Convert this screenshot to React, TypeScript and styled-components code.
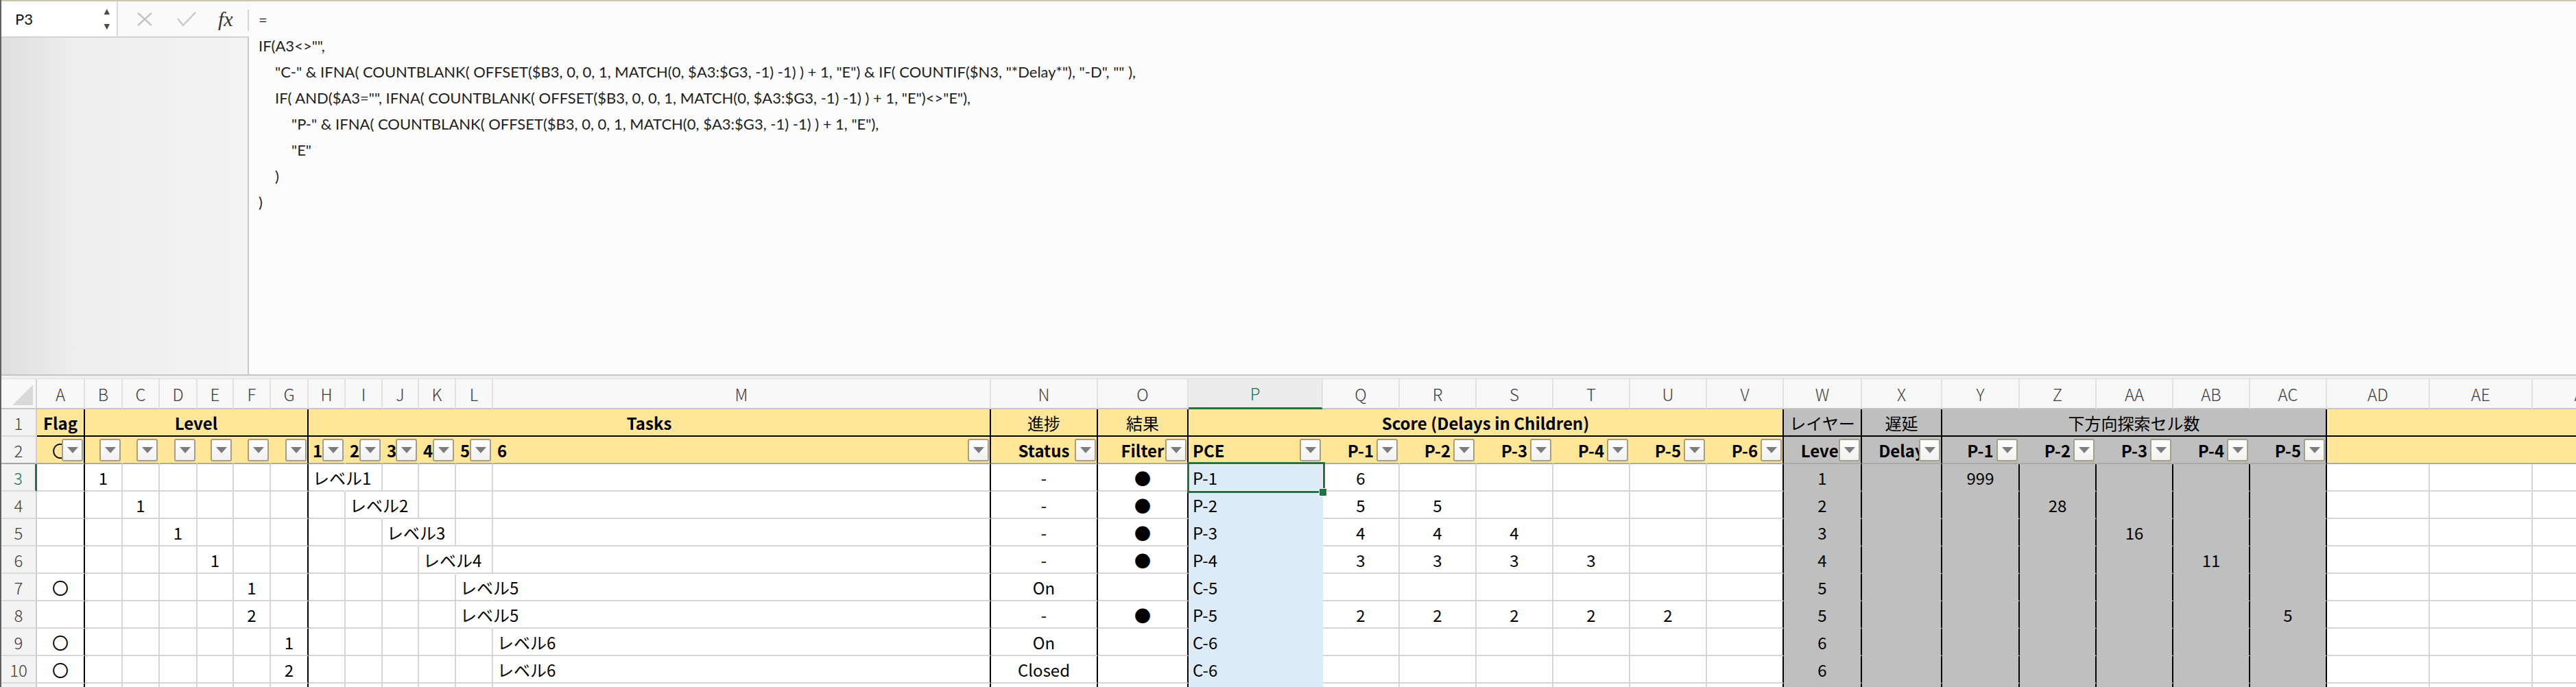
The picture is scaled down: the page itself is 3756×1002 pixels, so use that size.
import React from "react";
import styled, { createGlobalStyle } from "styled-components";

const YELLOW = "#ffe699";
const GRAY = "#bfbfbf";
const BLUE = "#ddebf7";
const GRID = "#d6d6d6";
const GREEN = "#217346";
const FREEZE = "#a9a9a9";

type Edge = "none" | "grid" | "black" | "freeze";

const edge = (e?: Edge) =>
  e === "black" ? "#000" : e === "grid" ? GRID : e === "freeze" ? FREEZE : "transparent";

const GlobalStyle = createGlobalStyle`
  html, body { margin: 0; padding: 0; background: #ffffff; }
  body { width: 3756px; height: 1002px; overflow: hidden; }
`;

const Window = styled.div`
  width: 3756px;
  height: 1002px;
  overflow: hidden;
  display: flex;
  flex-direction: column;
  box-sizing: border-box;
  border-left: 2px solid #5e6066;
  background: #fff;
`;

const TopRule = styled.div`
  height: 2px;
  background: #c9c5b1;
`;

const FormulaBar = styled.div`
  height: 544px;
  display: flex;
`;

const LeftPane = styled.div`
  width: 361px;
  display: flex;
  flex-direction: column;
`;

const NameRow = styled.div`
  height: 51px;
  display: flex;
  border-bottom: 2px solid #d3d3d3;
`;

const NameBox = styled.div`
  width: 170px;
  box-sizing: border-box;
  background: #fff;
  border-right: 2px solid #dadada;
  display: flex;
  align-items: center;
  justify-content: space-between;
  padding: 0 10px 0 20px;
  font-family: "Lato", "Liberation Sans", sans-serif;
  font-size: 22px;
  color: #111;
`;

const Spinner = styled.div`
  display: flex;
  flex-direction: column;
  gap: 11px;
  color: #4a4a4a;
  font-size: 11px;
  line-height: 11px;
  font-family: "DejaVu Sans", sans-serif;
`;

const BarButtons = styled.div`
  flex: 1;
  position: relative;
  display: flex;
  align-items: center;
  gap: 36px;
  padding-left: 28px;
  background: #fafafa;

  &::after {
    content: "";
    position: absolute;
    right: 0;
    top: 12px;
    bottom: 8px;
    width: 2px;
    background: #d4d4d4;
  }
`;

const Fx = styled.span`
  font-family: "Liberation Serif", serif;
  font-style: italic;
  font-size: 30px;
  color: #333;
  margin-left: -4px;
`;

const PaneFill = styled.div`
  flex: 1;
  background: linear-gradient(90deg, #dedede 0%, #eeeeee 30%, #f3f3f3 100%);
  border-right: 2px solid #c9c9c9;
`;

const FormulaText = styled.div`
  flex: 1;
  background: #fcfcfc;
  padding: 8px 0 0 14px;
  font-family: "Lato", "Liberation Sans", sans-serif;
  font-size: 22px;
  line-height: 38px;
  color: #1e1e1e;
`;

const Line = styled.div<{ $indent: number }>`
  white-space: pre;
  padding-left: ${(p) => p.$indent * 24}px;
`;

const Splitter = styled.div`
  height: 7px;
  box-sizing: border-box;
  background: #f0f0f0;
  border-top: 2px solid #c6c6c6;
  border-bottom: 1px solid #dcdcdc;
`;

const Sheet = styled.div<{ $cols: string }>`
  flex: 1;
  overflow: hidden;
  display: grid;
  grid-template-columns: ${(p) => p.$cols};
  grid-template-rows: 44px;
  grid-auto-rows: 40px;
  font-family: "Noto Sans CJK JP", "Liberation Sans", sans-serif;
  font-size: 24px;
  color: #000;
`;

const Corner = styled.div`
  position: relative;
  background: #f8f8f8;
  box-sizing: border-box;
  border-right: 2px solid #d4d4d4;
  border-bottom: 2px solid #c6c6c6;

  &::after {
    content: "";
    position: absolute;
    right: 4px;
    bottom: 4px;
    border-left: 30px solid transparent;
    border-bottom: 30px solid #d9d9d9;
  }
`;

const ColHead = styled.div<{ $sel?: boolean }>`
  box-sizing: border-box;
  display: flex;
  align-items: center;
  justify-content: center;
  background: ${(p) => (p.$sel ? "#ececec" : "#f8f8f8")};
  color: ${(p) => (p.$sel ? GREEN : "#3a3a3a")};
  border-right: 2px solid #e2e2e2;
  border-bottom: ${(p) => (p.$sel ? `3px solid ${GREEN}` : "2px solid #c6c6c6")};
  font-weight: 300;
  overflow: hidden;
`;

const RowHead = styled.div<{ $sel?: boolean; $freeze?: boolean }>`
  box-sizing: border-box;
  display: flex;
  align-items: center;
  justify-content: center;
  background: #f3f3f3;
  color: ${(p) => (p.$sel ? GREEN : "#3a3a3a")};
  border-right: ${(p) => (p.$sel ? `3px solid ${GREEN}` : "2px solid #cdcdcd")};
  border-bottom: 2px solid ${(p) => (p.$freeze ? FREEZE : "#dadada")};
  font-weight: 300;
`;

const Cell = styled.div<{
  $bg: string;
  $r: Edge;
  $b: Edge;
  $span: number;
  $align: "left" | "center";
  $bold?: boolean;
  $front?: boolean;
}>`
  position: relative;
  box-sizing: border-box;
  display: flex;
  align-items: center;
  justify-content: ${(p) => (p.$align === "left" ? "flex-start" : "center")};
  padding: 0 ${(p) => (p.$align === "left" ? "6px" : "2px")};
  grid-column: span ${(p) => p.$span};
  background: ${(p) => p.$bg};
  border-right: 2px solid ${(p) => edge(p.$r)};
  border-bottom: 2px solid ${(p) => edge(p.$b)};
  font-weight: ${(p) => (p.$bold ? 700 : 400)};
  white-space: nowrap;
  overflow: ${(p) => (p.$front ? "visible" : "hidden")};
  z-index: ${(p) => (p.$front ? 2 : "auto")};
`;

const FilterBtn = styled.span`
  position: absolute;
  right: 1px;
  top: 3px;
  width: 31px;
  height: 33px;
  box-sizing: border-box;
  border: 2px solid #a49f88;
  border-radius: 3px;
  background: linear-gradient(#ffffff, #f0f0f0);
  display: flex;
  align-items: center;
  justify-content: center;

  &::after {
    content: "";
    border-left: 8px solid transparent;
    border-right: 8px solid transparent;
    border-top: 9px solid #7b7b7b;
  }
`;

const SelBox = styled.span`
  position: absolute;
  left: -2px;
  top: -3px;
  width: 201px;
  height: 45px;
  box-sizing: border-box;
  border: 3px solid ${GREEN};
  box-shadow: inset 0 0 0 1px #fff;
  pointer-events: none;
`;

const FillHandle = styled.span`
  position: absolute;
  right: -5px;
  bottom: -7px;
  width: 10px;
  height: 10px;
  background: ${GREEN};
  outline: 1px solid #fff;
`;

const COLS: { id: string; w: number }[] = [
  { id: "A", w: 70 }, { id: "B", w: 55 }, { id: "C", w: 54 }, { id: "D", w: 55 },
  { id: "E", w: 53 }, { id: "F", w: 54 }, { id: "G", w: 55 }, { id: "H", w: 54 },
  { id: "I", w: 54 }, { id: "J", w: 53 }, { id: "K", w: 54 }, { id: "L", w: 54 },
  { id: "M", w: 726 }, { id: "N", w: 156 }, { id: "O", w: 132 }, { id: "P", w: 196 },
  { id: "Q", w: 112 }, { id: "R", w: 112 }, { id: "S", w: 112 }, { id: "T", w: 112 },
  { id: "U", w: 112 }, { id: "V", w: 112 }, { id: "W", w: 114 }, { id: "X", w: 117 },
  { id: "Y", w: 113 }, { id: "Z", w: 112 }, { id: "AA", w: 112 }, { id: "AB", w: 112 },
  { id: "AC", w: 112 }, { id: "AD", w: 150 }, { id: "AE", w: 150 }, { id: "AF", w: 150 },
];

const GRAY_COLS = ["W", "X", "Y", "Z", "AA", "AB", "AC"];
const BLACK_RIGHT = ["A", "G", "M", "N", "O", "V", "W", "X", "Y", "Z", "AA", "AB", "AC"];
const TASK_COLS = ["H", "I", "J", "K", "L", "M"];

interface Spec {
  col: string;
  text?: React.ReactNode;
  span?: number;
  bg?: string;
  r?: Edge;
  b?: Edge;
  align?: "left" | "center";
  bold?: boolean;
  btn?: boolean;
  front?: boolean;
  sel?: boolean;
}

const DATA: Record<number, Record<string, string>> = {
  3: { B: "1", H: "レベル1", N: "-", O: "●", P: "P-1", Q: "6", W: "1", Y: "999" },
  4: { C: "1", I: "レベル2", N: "-", O: "●", P: "P-2", Q: "5", R: "5", W: "2", Z: "28" },
  5: { D: "1", J: "レベル3", N: "-", O: "●", P: "P-3", Q: "4", R: "4", S: "4", W: "3", AA: "16" },
  6: { E: "1", K: "レベル4", N: "-", O: "●", P: "P-4", Q: "3", R: "3", S: "3", T: "3", W: "4", AB: "11" },
  7: { A: "〇", F: "1", L: "レベル5", N: "On", P: "C-5", W: "5" },
  8: { F: "2", L: "レベル5", N: "-", O: "●", P: "P-5", Q: "2", R: "2", S: "2", T: "2", U: "2", W: "5", AC: "5" },
  9: { A: "〇", G: "1", M: "レベル6", N: "On", P: "C-6", W: "6" },
  10: { A: "〇", G: "2", M: "レベル6", N: "Closed", P: "C-6", W: "6" },
  11: {},
};

const row1: Spec[] = [
  { col: "A", text: "Flag", bold: true, r: "black" },
  { col: "B", text: "Level", bold: true, span: 6, r: "black" },
  { col: "H", text: "Tasks", bold: true, span: 6, r: "black" },
  { col: "N", text: "進捗", r: "black" },
  { col: "O", text: "結果", r: "black" },
  { col: "P", text: "Score (Delays in Children)", bold: true, span: 7, r: "black" },
  { col: "W", text: "レイヤー", bg: GRAY, r: "black" },
  { col: "X", text: "遅延", bg: GRAY, r: "black" },
  { col: "Y", text: "下方向探索セル数", bg: GRAY, span: 5, r: "black" },
  { col: "AD", span: 3 },
].map((s) => ({ bg: YELLOW, b: "black" as Edge, ...s }));

const row2: Spec[] = [
  { col: "A", text: "〇", btn: true, r: "black" },
  { col: "B", btn: true }, { col: "C", btn: true }, { col: "D", btn: true },
  { col: "E", btn: true }, { col: "F", btn: true }, { col: "G", btn: true, r: "black" },
  { col: "H", text: "1", btn: true, align: "left" },
  { col: "I", text: "2", btn: true, align: "left" },
  { col: "J", text: "3", btn: true, align: "left" },
  { col: "K", text: "4", btn: true, align: "left" },
  { col: "L", text: "5", btn: true, align: "left" },
  { col: "M", text: "6", btn: true, align: "left", r: "black" },
  { col: "N", text: "Status", btn: true, r: "black" },
  { col: "O", text: "Filter", btn: true, r: "black" },
  { col: "P", text: "PCE", btn: true, align: "left" },
  { col: "Q", text: "P-1", btn: true }, { col: "R", text: "P-2", btn: true },
  { col: "S", text: "P-3", btn: true }, { col: "T", text: "P-4", btn: true },
  { col: "U", text: "P-5", btn: true }, { col: "V", text: "P-6", btn: true, r: "black" },
  { col: "W", text: "Level", btn: true, bg: GRAY, r: "black" },
  { col: "X", text: "Delay", btn: true, bg: GRAY, r: "black" },
  { col: "Y", text: "P-1", btn: true, bg: GRAY }, { col: "Z", text: "P-2", btn: true, bg: GRAY },
  { col: "AA", text: "P-3", btn: true, bg: GRAY }, { col: "AB", text: "P-4", btn: true, bg: GRAY },
  { col: "AC", text: "P-5", btn: true, bg: GRAY, r: "black" },
  { col: "AD", span: 3 },
].map((s) => ({ bg: YELLOW, b: "freeze" as Edge, bold: s.col !== "A", ...s }));

function dataRow(n: number): Spec[] {
  const vals = DATA[n] ?? {};
  return COLS.map(({ id }) => {
    const text = vals[id];
    const gray = GRAY_COLS.includes(id);
    const isTask = TASK_COLS.includes(id) && !!text;
    let r: Edge = BLACK_RIGHT.includes(id) ? "black" : "grid";
    if (id === "P") r = "none";
    if (isTask && id !== "M") r = "none";
    return {
      col: id,
      text,
      bg: gray ? GRAY : id === "P" ? BLUE : "#fff",
      r,
      b: gray || id === "P" ? "none" : "grid",
      align: TASK_COLS.includes(id) || id === "P" ? "left" : "center",
      front: isTask || (n === 3 && id === "P"),
      sel: n === 3 && id === "P",
    } as Spec;
  });
}

const ROWS: { n: number; cells: Spec[] }[] = [
  { n: 1, cells: row1 },
  { n: 2, cells: row2 },
  ...[3, 4, 5, 6, 7, 8, 9, 10, 11].map((n) => ({ n, cells: dataRow(n) })),
];

const FORMULA: [number, string][] = [
  [0, "="],
  [0, 'IF(A3<>"",'],
  [1, '"C-" & IFNA( COUNTBLANK( OFFSET($B3, 0, 0, 1, MATCH(0, $A3:$G3, -1) -1) ) + 1, "E") & IF( COUNTIF($N3, "*Delay*"), "-D", "" ),'],
  [1, 'IF( AND($A3="", IFNA( COUNTBLANK( OFFSET($B3, 0, 0, 1, MATCH(0, $A3:$G3, -1) -1) ) + 1, "E")<>"E"),'],
  [2, '"P-" & IFNA( COUNTBLANK( OFFSET($B3, 0, 0, 1, MATCH(0, $A3:$G3, -1) -1) ) + 1, "E"),'],
  [2, '"E"'],
  [1, ")"],
  [0, ")"],
];

export default function App() {
  const template = `52px ${COLS.map((c) => `${c.w}px`).join(" ")}`;
  return (
    <>
      <GlobalStyle />
      <Window>
        <TopRule />
        <FormulaBar>
          <LeftPane>
            <NameRow>
              <NameBox>
                P3
                <Spinner>
                  <span>▲</span>
                  <span>▼</span>
                </Spinner>
              </NameBox>
              <BarButtons>
                <svg width="22" height="20" viewBox="0 0 22 20">
                  <path d="M1 1 L21 19 M21 1 L1 19" stroke="#c4c4c4" strokeWidth="2.4" fill="none" />
                </svg>
                <svg width="28" height="22" viewBox="0 0 28 22">
                  <path d="M1 10 L9 20 L27 1" stroke="#c8c8c8" strokeWidth="2.4" fill="none" />
                </svg>
                <Fx>fx</Fx>
              </BarButtons>
            </NameRow>
            <PaneFill />
          </LeftPane>
          <FormulaText>
            {FORMULA.map(([indent, text], i) => (
              <Line key={i} $indent={indent}>
                {text}
              </Line>
            ))}
          </FormulaText>
        </FormulaBar>
        <Splitter />
        <Sheet $cols={template}>
          <Corner />
          {COLS.map((c) => (
            <ColHead key={c.id} $sel={c.id === "P"}>
              {c.id}
            </ColHead>
          ))}
          {ROWS.map((row) => (
            <React.Fragment key={row.n}>
              <RowHead $sel={row.n === 3} $freeze={row.n === 2}>
                {row.n < 11 ? row.n : null}
              </RowHead>
              {row.cells.map((c) => (
                <Cell
                  key={c.col}
                  $bg={c.bg ?? "#fff"}
                  $r={c.r ?? "none"}
                  $b={c.b ?? "grid"}
                  $span={c.span ?? 1}
                  $align={c.align ?? "center"}
                  $bold={c.bold}
                  $front={c.front}
                >
                  {c.text}
                  {c.btn && <FilterBtn />}
                  {c.sel && (
                    <SelBox>
                      <FillHandle />
                    </SelBox>
                  )}
                </Cell>
              ))}
            </React.Fragment>
          ))}
        </Sheet>
      </Window>
    </>
  );
}
